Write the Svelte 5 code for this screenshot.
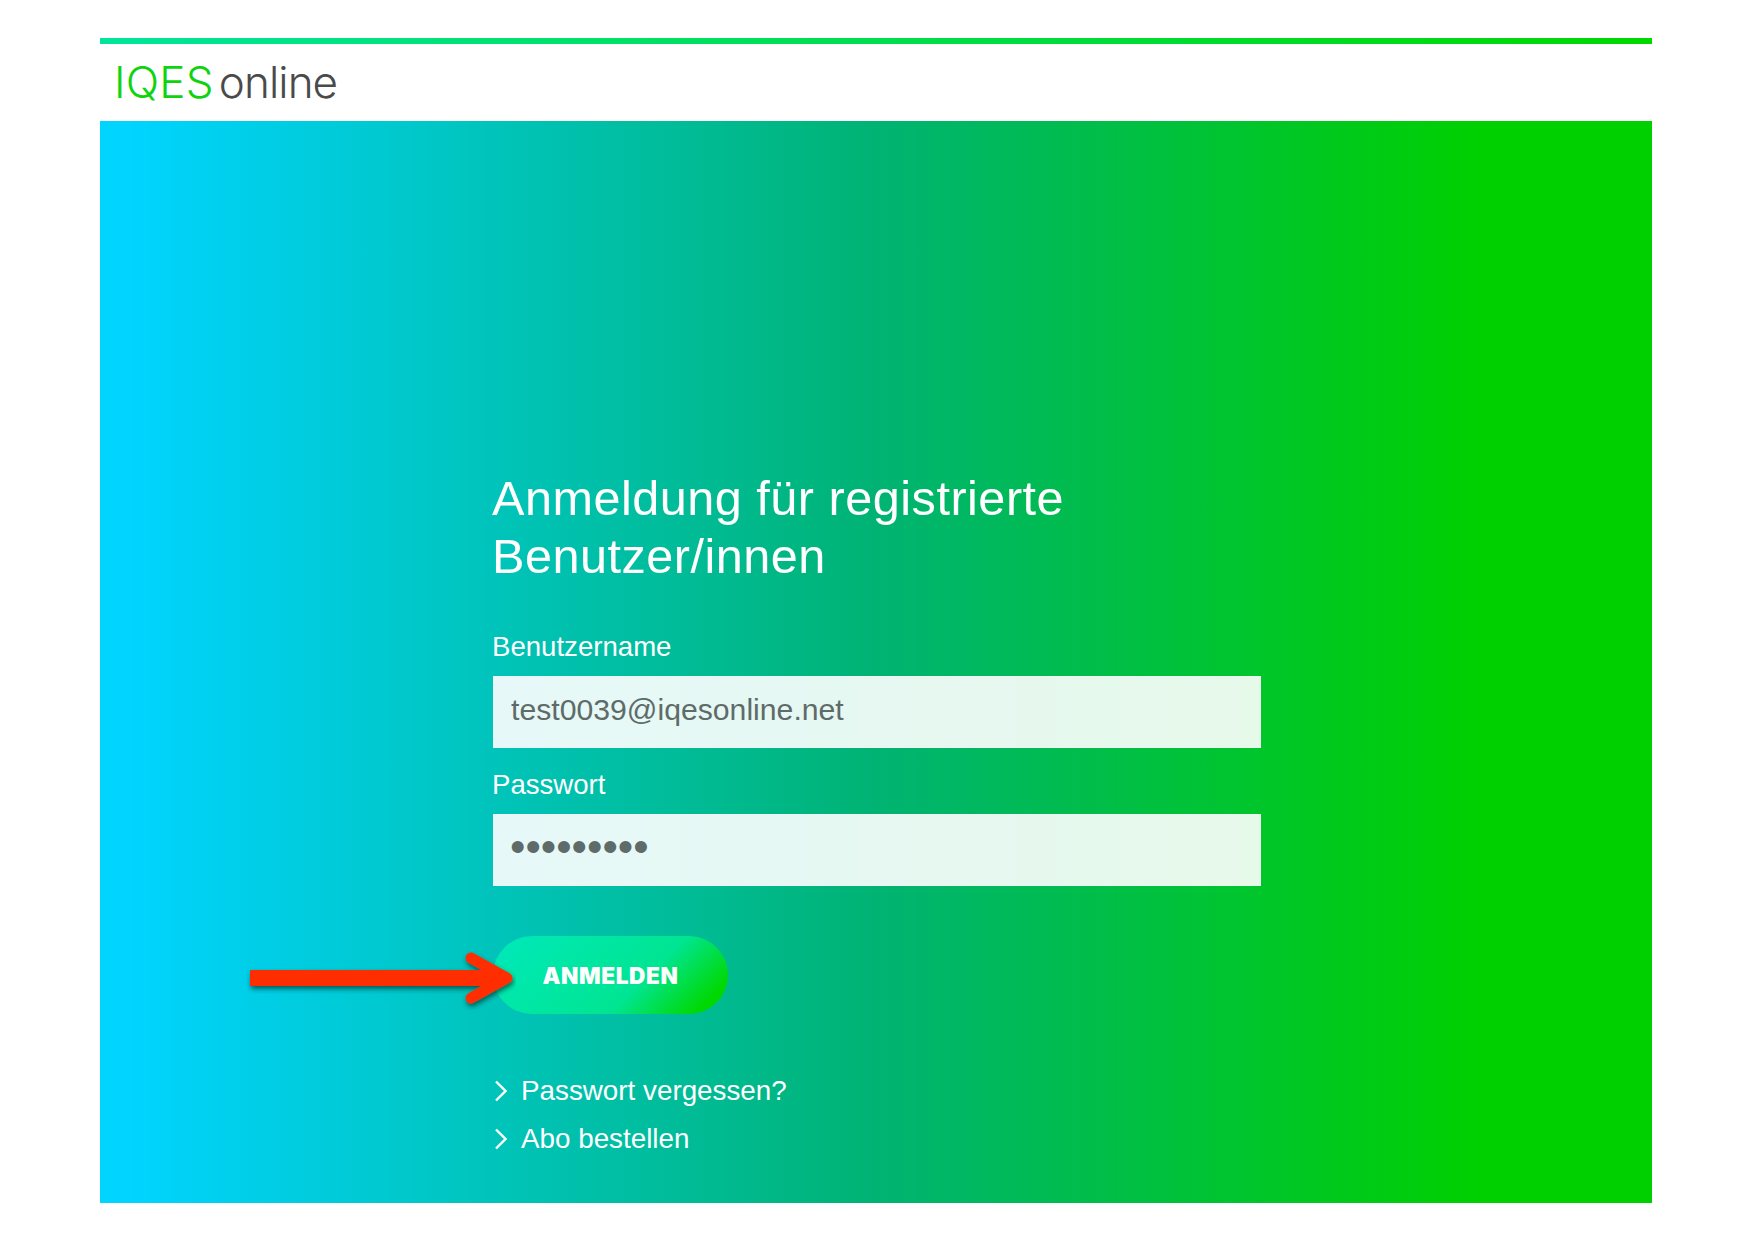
<script lang="ts">
	let username = 'test0039@iqesonline.net';
	let password = 'geheim123';
	const links = ['Passwort vergessen?', 'Abo bestellen'];
</script>

<div class="page">
	<div class="topline"></div>
	<header class="brand">
		<span class="iqes">IQES</span><span class="online">online</span>
	</header>
	<main class="hero">
		<form class="login" onsubmit={(e) => e.preventDefault()}>
			<h1>Anmeldung für registrierte Benutzer/innen</h1>
			<label class="field">
				<span>Benutzername</span>
				<input type="text" bind:value={username} />
			</label>
			<label class="field second">
				<span>Passwort</span>
				<input class="pw" type="password" bind:value={password} />
			</label>
			<div class="submit-row">
				<button type="submit">ANMELDEN</button>
				<svg class="arrow" width="270" height="64" viewBox="0 0 270 64" aria-hidden="true">
					<defs>
						<filter id="arrow-shadow" x="-5%" y="-20%" width="110%" height="150%">
							<feDropShadow dx="1" dy="3" stdDeviation="2.5" flood-color="#00302c" flood-opacity="0.7" />
						</filter>
					</defs>
					<g filter="url(#arrow-shadow)">
						<path d="M4 24H244L258 32L244 40H4Z" fill="#ff2d00" />
						<path d="M225 12L261 32L225 52" fill="none" stroke="#ff2d00" stroke-width="11" stroke-linecap="round" stroke-linejoin="round" />
					</g>
				</svg>
			</div>
			<ul class="links">
				{#each links as link}
					<li>
						<svg width="14" height="22" viewBox="0 0 14 22" aria-hidden="true">
							<path d="M3 1.5L12.5 11L3 20.5" fill="none" stroke="currentColor" stroke-width="2.4" />
						</svg>
						<a href="#top">{link}</a>
					</li>
				{/each}
			</ul>
		</form>
	</main>
</div>

<style>
	:global(body) {
		margin: 0;
		background: #fff;
	}

	.page {
		box-sizing: border-box;
		width: 1754px;
		height: 1240px;
		padding: 38px 102px 0 100px;
		font-family: 'Liberation Sans', Arial, sans-serif;
	}

	.topline {
		height: 6px;
		background: linear-gradient(90deg, #00e59b, #00d800);
	}

	.brand {
		height: 77px;
		box-sizing: border-box;
		padding: 10px 0 0 14px;
		font-family: Inter, 'Liberation Sans', sans-serif;
		font-size: 44px;
		font-weight: 300;
		line-height: 56px;
	}

	.iqes {
		color: #0ed40e;
		margin-right: 5px;
		letter-spacing: 0.2px;
	}

	.online {
		color: #4a4a4a;
		letter-spacing: -0.9px;
	}

	.hero {
		height: 1082px;
		box-sizing: border-box;
		padding: 348px 0 0 393px;
		background: linear-gradient(90deg, #00d4ff 2%, #00b373 50%, #00d000 89%);
		color: #fff;
	}

	.login {
		width: 768px;
	}

	h1 {
		margin: 0 0 42px -1px;
		width: 640px;
		font-size: 48.6px;
		font-weight: 400;
		letter-spacing: 0.5px;
		line-height: 58px;
	}

	.field {
		display: block;
	}

	.field span {
		display: block;
		margin: 0 0 9px -1px;
		font-size: 27.6px;
		line-height: 40px;
	}

	.second {
		margin-top: 17px;
	}

	input {
		display: block;
		box-sizing: border-box;
		width: 100%;
		height: 72px;
		padding: 0 17px 4px;
		border: 1px solid rgba(255, 255, 255, 0.35);
		border-radius: 0;
		background: rgba(255, 255, 255, 0.9);
		color: #5f6b68;
		font: inherit;
		font-size: 30.2px;
		outline: none;
	}

	.pw {
		font-size: 44px;
		letter-spacing: 0;
		padding: 0 17px 7px 16px;
	}

	.submit-row {
		position: relative;
		margin-top: 50px;
	}

	button {
		display: block;
		width: 235px;
		height: 78px;
		border: none;
		border-radius: 39px;
		background: linear-gradient(135deg, #00e8b4 10%, #00e592 62%, #00d800 90%);
		color: #fff;
		font-family: Inter, 'Liberation Sans', sans-serif;
		font-size: 22.6px;
		font-weight: 900;
		letter-spacing: 0.6px;
	}

	.arrow {
		position: absolute;
		left: -247px;
		top: 10px;
	}

	.links {
		list-style: none;
		margin: 53px 0 0;
		padding: 0;
	}

	.links li {
		display: flex;
		align-items: center;
		gap: 14px;
		height: 48px;
		font-size: 27.8px;
	}

	.links a {
		color: #fff;
		text-decoration: none;
	}
</style>
